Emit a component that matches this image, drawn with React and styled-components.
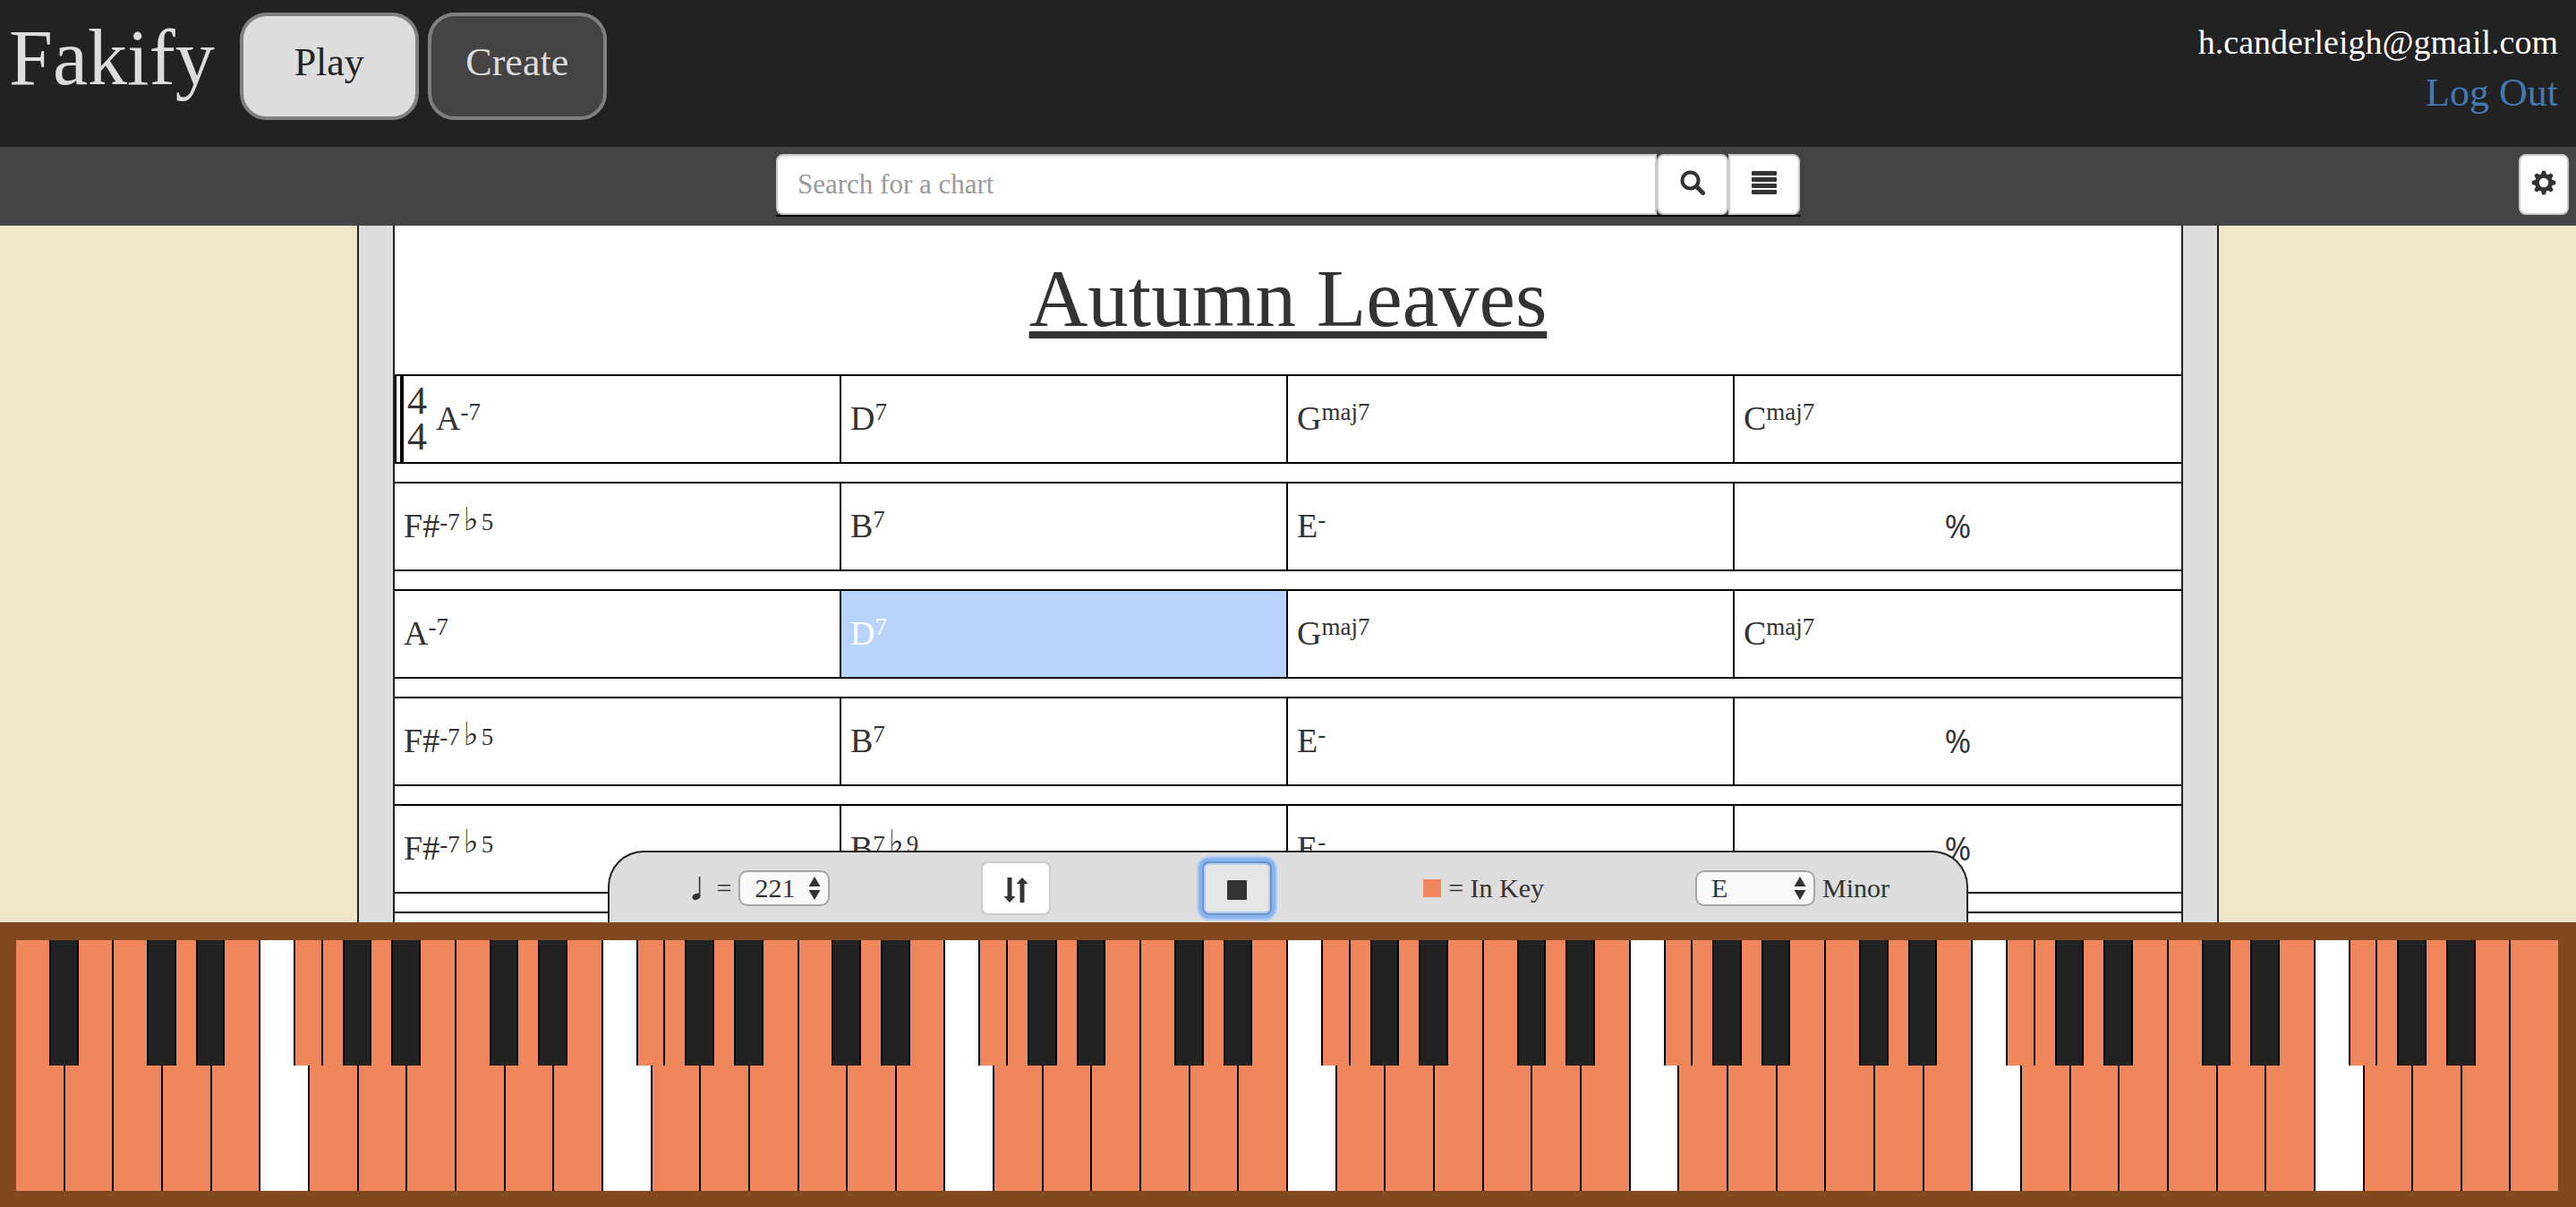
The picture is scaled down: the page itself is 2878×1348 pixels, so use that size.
import React, { useState } from "react";
import styled, { createGlobalStyle, css } from "styled-components";

const Global = createGlobalStyle`
  * { box-sizing: border-box; }
  body {
    margin: 0;
    background: #efe5c9;
    color: #333;
    font-family: "Liberation Serif", "Times New Roman", serif;
    font-size: 30px;
  }
  button, input, select { font: inherit; color: inherit; margin: 0; }
`;

const Page = styled.div`
  display: flex;
  flex-direction: column;
  height: 100vh;
  overflow: hidden;
`;

const Header = styled.header`
  display: flex;
  align-items: flex-start;
  gap: 28px;
  min-height: 164px;
  padding: 14px 20px 14px 10px;
  background: #222;
`;

const Brand = styled.h1`
  margin: 0;
  color: #ddd;
  font-size: 88px;
  font-weight: 400;
  line-height: 102px;
`;

const Modes = styled.nav`
  display: flex;
  gap: 10px;
`;

const ModeButton = styled.button`
  width: 200px;
  height: 120px;
  padding: 0 0 10px;
  border: 4px solid #808080;
  border-radius: 30px;
  background: ${(p) => (p.$active ? "#ddd" : "#444")};
  color: ${(p) => (p.$active ? "#222" : "#ddd")};
  font-size: 44px;
`;

const Account = styled.div`
  display: flex;
  flex-direction: column;
  align-items: flex-end;
  gap: 4px;
  margin-left: auto;
  padding-top: 8px;
  color: #fff;
  font-size: 38px;
  line-height: 50px;
`;

const LogOut = styled.a`
  color: #4279b5;
  font-size: 44px;
  line-height: 56px;
  text-decoration: none;
`;

const Toolbar = styled.div`
  display: grid;
  grid-template-columns: 1fr minmax(0, 1144px) 1fr;
  align-items: start;
  min-height: 88px;
  padding: 8px;
  background: #444;
`;

const SearchGroup = styled.form`
  grid-column: 2;
  display: flex;
  border-bottom: 2px solid #000;
`;

const control = css`
  height: 68px;
  border: 2px solid #ccc;
  background: #fff;
`;

const SearchInput = styled.input`
  ${control}
  flex: 1;
  min-width: 0;
  padding: 0 22px;
  border-radius: 8px 0 0 8px;
  box-shadow: inset 0 2px 2px rgba(0, 0, 0, 0.08);
  font-size: 31px;
  &::placeholder { color: #999; opacity: 1; }
`;

const IconButton = styled.button`
  ${control}
  display: flex;
  align-items: center;
  justify-content: center;
  width: ${(p) => p.$width || 80}px;
  padding: 0 0 4px;
  border-radius: ${(p) => p.$radius || "8px"};
`;

const Settings = styled.div`
  grid-column: 3;
  justify-self: end;
`;

const Stage = styled.main`
  position: relative;
  flex: 1;
  min-height: 0;
  overflow: hidden;
  display: flex;
  justify-content: center;
`;

const Binder = styled.div`
  flex: 0 1 2080px;
  padding: 0 38px;
  border: 2px solid #222;
  border-width: 0 2px;
  background: #ddd;
`;

const Sheet = styled.article`
  min-height: 100%;
  border: 2px solid #222;
  border-width: 0 2px;
  background: #fff;
`;

const Title = styled.h2`
  margin: 0;
  padding: 30px 0 32px;
  font-size: 91px;
  font-weight: 400;
  line-height: 104px;
  text-align: center;
  text-decoration: underline;
  text-decoration-thickness: 8px;
  text-underline-offset: 6px;
  text-decoration-skip-ink: none;
`;

const Rows = styled.div`
  display: flex;
  flex-direction: column;
  gap: 20px;
`;

const Row = styled.div`
  display: grid;
  grid-template-columns: repeat(4, 1fr);
  height: 100px;
  border: 2px solid #000;
  border-width: 2px 0;
`;

const Measure = styled.div`
  display: flex;
  align-items: center;
  justify-content: ${(p) => (p.$repeat ? "center" : "flex-start")};
  padding: 0 10px;
  padding-left: ${(p) => (p.$first ? 0 : 10)}px;
  font-size: 38px;
  line-height: 44px;
  color: ${(p) => (p.$playing ? "#fff" : "#333")};
  background: ${(p) => (p.$playing ? "#b8d4fd" : "transparent")};
  &:not(:last-child) { border-right: 2px solid #000; }
`;

const OpeningBar = styled.span`
  align-self: stretch;
  width: 10px;
  border: solid #000;
  border-width: 0 4px 0 2px;
`;

const Meter = styled.span`
  display: flex;
  flex-direction: column;
  padding: 0 10px 0 4px;
  font-size: 44px;
  line-height: 40px;
`;

const Chord = styled.span`
  display: flex;
  align-items: baseline;
  padding-bottom: 2px;
  white-space: nowrap;
`;

const Quality = styled.sup`
  align-self: flex-start;
  display: inline-flex;
  align-items: baseline;
  font-size: 27px;
  line-height: 30px;
  vertical-align: baseline;
`;

const Flat = styled.span`
  padding: 0 3px 0 4px;
  font-family: "DejaVu Sans", sans-serif;
  font-size: 36px;
`;

const Repeat = styled.span`
  font-family: "Open Sans", "Noto Sans", sans-serif;
  font-size: 36px;
`;

const Controls = styled.section`
  position: absolute;
  left: 50%;
  bottom: 0;
  display: flex;
  align-items: center;
  justify-content: space-between;
  width: min(1520px, 100%);
  height: 80px;
  padding: 2px 86px 0 92px;
  border: 2px solid #222;
  border-bottom: 0;
  border-radius: 40px 40px 0 0;
  background: #ddd;
  transform: translateX(-50%);
`;

const Field = styled.label`
  display: flex;
  align-items: center;
  gap: 8px;
`;

const Picker = styled.span`
  display: grid;
  align-items: center;
  width: ${(p) => p.$width}px;
  & > * { grid-area: 1 / 1; }
  & > svg { justify-self: end; margin-right: 10px; pointer-events: none; }
`;

const Select = styled.select`
  appearance: none;
  width: 100%;
  height: 40px;
  padding: 0 0 0 16px;
  border: 2px solid #a6a6a6;
  border-radius: 10px;
  background: #f8f8f8;
  line-height: 34px;
`;

const PanelButton = styled.button`
  display: flex;
  align-items: center;
  justify-content: center;
  width: 78px;
  height: 60px;
  padding: 4px 0 0;
  border: 2px solid ${(p) => (p.$focused ? "#6593cf" : "#ccc")};
  border-radius: 8px;
  background: ${(p) => (p.$focused ? "#e6e6e6" : "#fff")};
  box-shadow: ${(p) =>
    p.$focused
      ? "0 0 0 4px #88b3ee, 0 0 0 6px #b3cdf0, inset 0 0 0 2px #b9cfec"
      : "none"};
`;

const Swatch = styled.span`
  width: 20px;
  height: 20px;
  background: #f0865c;
`;

const Keyboard = styled.section`
  display: flex;
  height: 318px;
  padding: 20px 20px 18px 18px;
  background: #82481f;
`;

const KeySlot = styled.div`
  position: relative;
  flex: 1 1 0;
  min-width: 0;
  border-right: 2px solid #000;
  &:last-child { border-right: 0; }
`;

const WhiteKey = styled.button`
  display: block;
  width: 100%;
  height: 100%;
  padding: 0;
  border: 0;
  background: ${(p) => (p.$inKey ? "#f0865c" : "#fff")};
`;

const BlackKey = styled.button`
  position: absolute;
  top: 0;
  right: -32%;
  z-index: 1;
  width: 62%;
  height: 50%;
  padding: 0;
  border: solid #000;
  border-width: 0 2px;
  background: ${(p) => (p.$inKey ? "#f0865c" : "#222")};
`;

const SearchIcon = () => (
  <svg width="28" height="28" viewBox="0 0 28 28" aria-hidden="true">
    <circle cx="11.5" cy="11.5" r="9" fill="none" stroke="#333" strokeWidth="4" />
    <path d="M18.5 18.5 25.5 25.5" stroke="#333" strokeWidth="5" strokeLinecap="round" />
  </svg>
);

const ListIcon = () => (
  <svg width="28" height="26" viewBox="0 0 28 26" fill="#333" aria-hidden="true">
    {[0, 7, 14, 21].map((y) => (
      <rect key={y} y={y} width="28" height="5" rx="1" />
    ))}
  </svg>
);

const GearIcon = () => (
  <svg width="28" height="28" viewBox="-14 -14 28 28" fill="#333" aria-hidden="true">
    {[0, 45, 90, 135, 180, 225, 270, 315].map((a) => (
      <path key={a} d="M-3.4 -8 -2 -13 Q0 -14 2 -13 L3.4 -8Z" transform={`rotate(${a})`} />
    ))}
    <circle r="7.6" fill="none" stroke="#333" strokeWidth="4.8" />
  </svg>
);

const NoteIcon = () => (
  <svg width="12" height="28" viewBox="0 0 12 28" aria-hidden="true">
    <ellipse cx="5" cy="23.4" rx="4.6" ry="3.4" fill="#333" transform="rotate(-24 5 23.4)" />
    <path d="M8.6 1V23" stroke="#333" strokeWidth="1.6" />
  </svg>
);

const StepperIcon = () => (
  <svg width="14" height="28" viewBox="0 0 14 28" fill="#333" aria-hidden="true">
    <path d="M7 1 13.500 12H0.500ZM7 27 0.500 16H13.500Z" />
  </svg>
);

const SwapIcon = () => (
  <svg width="28" height="28" viewBox="0 0 28 28" fill="#333" aria-hidden="true">
    <path d="M4.500 0H9.500V21H13.500L7 28 0.500 21H4.500ZM18.500 28H23.500V7H27.500L21 0 14.500 7H18.500Z" />
  </svg>
);

const StopIcon = () => (
  <svg width="22" height="22" viewBox="0 0 22 22" aria-hidden="true">
    <rect width="22" height="22" rx="1" fill="#333" />
  </svg>
);

const CHART = [
  [["A", "-7"], ["D", "7"], ["G", "maj7"], ["C", "maj7"]],
  [["F#", "-7♭5"], ["B", "7"], ["E", "-"], ["%"]],
  [["A", "-7"], ["D", "7"], ["G", "maj7"], ["C", "maj7"]],
  [["F#", "-7♭5"], ["B", "7"], ["E", "-"], ["%"]],
  [["F#", "-7♭5"], ["B", "7♭9"], ["E", "-"], ["%"]],
  [null, null, null, null],
];
const PLAYING = { row: 2, measure: 1 };

const NATURALS = ["A", "B", "C", "D", "E", "F", "G"];
const SHARPS = ["A", "C", "D", "F", "G"];
const E_MINOR = ["E", "F#", "G", "A", "B", "C", "D"];
const KEYS = Array.from({ length: 52 }, (_, i) => NATURALS[i % 7]);
const TONICS = ["A", "B♭", "B", "C", "D♭", "D", "E♭", "E", "F", "F#", "G", "A♭"];

function ChordSymbol({ root, quality }) {
  return (
    <Chord>
      {root}
      <Quality>
        {quality.split(/(♭)/).map((part, i) =>
          part === "♭" ? <Flat key={i}>♭</Flat> : <span key={i}>{part}</span>
        )}
      </Quality>
    </Chord>
  );
}

function MeasureContent({ chord }) {
  if (!chord) return null;
  if (chord[0] === "%") return <Repeat>%</Repeat>;
  return <ChordSymbol root={chord[0]} quality={chord[1]} />;
}

export default function App() {
  const [mode, setMode] = useState("Play");
  const [tempo, setTempo] = useState("221");
  const [tonic, setTonic] = useState("E");

  return (
    <Page>
      <Global />
      <Header>
        <Brand>Fakify</Brand>
        <Modes>
          {["Play", "Create"].map((name) => (
            <ModeButton key={name} $active={mode === name} onClick={() => setMode(name)}>
              {name}
            </ModeButton>
          ))}
        </Modes>
        <Account>
          <span>h.canderleigh@gmail.com</span>
          <LogOut href="#logout">Log Out</LogOut>
        </Account>
      </Header>

      <Toolbar>
        <SearchGroup onSubmit={(e) => e.preventDefault()}>
          <SearchInput aria-label="Search for a chart" placeholder="Search for a chart" />
          <IconButton type="submit" aria-label="Search">
            <SearchIcon />
          </IconButton>
          <IconButton type="button" aria-label="Browse charts" $radius="0 8px 8px 0">
            <ListIcon />
          </IconButton>
        </SearchGroup>
        <Settings>
          <IconButton type="button" aria-label="Settings" $width={56}>
            <GearIcon />
          </IconButton>
        </Settings>
      </Toolbar>

      <Stage>
        <Binder>
          <Sheet>
            <Title>Autumn Leaves</Title>
            <Rows>
              {CHART.map((row, r) => (
                <Row key={r}>
                  {row.map((chord, m) => (
                    <Measure
                      key={m}
                      $first={r === 0 && m === 0}
                      $repeat={chord && chord[0] === "%"}
                      $playing={r === PLAYING.row && m === PLAYING.measure}
                    >
                      {r === 0 && m === 0 && (
                        <>
                          <OpeningBar />
                          <Meter>
                            <span>4</span>
                            <span>4</span>
                          </Meter>
                        </>
                      )}
                      <MeasureContent chord={chord} />
                    </Measure>
                  ))}
                </Row>
              ))}
            </Rows>
          </Sheet>
        </Binder>

        <Controls aria-label="Playback">
          <Field>
            <NoteIcon />
            <span>&nbsp;=</span>
            <Picker $width={102}>
              <Select aria-label="Tempo" value={tempo} onChange={(e) => setTempo(e.target.value)}>
                {["120", "160", "200", "221", "240"].map((t) => (
                  <option key={t}>{t}</option>
                ))}
              </Select>
              <StepperIcon />
            </Picker>
          </Field>
          <PanelButton aria-label="Move keyboard">
            <SwapIcon />
          </PanelButton>
          <PanelButton aria-label="Stop" $focused>
            <StopIcon />
          </PanelButton>
          <Field as="div">
            <Swatch />
            <span>= In Key</span>
          </Field>
          <Field>
            <Picker $width={134}>
              <Select aria-label="Key" value={tonic} onChange={(e) => setTonic(e.target.value)}>
                {TONICS.map((t) => (
                  <option key={t}>{t}</option>
                ))}
              </Select>
              <StepperIcon />
            </Picker>
            Minor
          </Field>
        </Controls>
      </Stage>

      <Keyboard aria-label="Piano">
        {KEYS.map((note, i) => (
          <KeySlot key={i}>
            <WhiteKey aria-label={note} $inKey={E_MINOR.includes(note)} />
            {SHARPS.includes(note) && i < 51 && (
              <BlackKey aria-label={`${note} sharp`} $inKey={E_MINOR.includes(`${note}#`)} />
            )}
          </KeySlot>
        ))}
      </Keyboard>
    </Page>
  );
}
